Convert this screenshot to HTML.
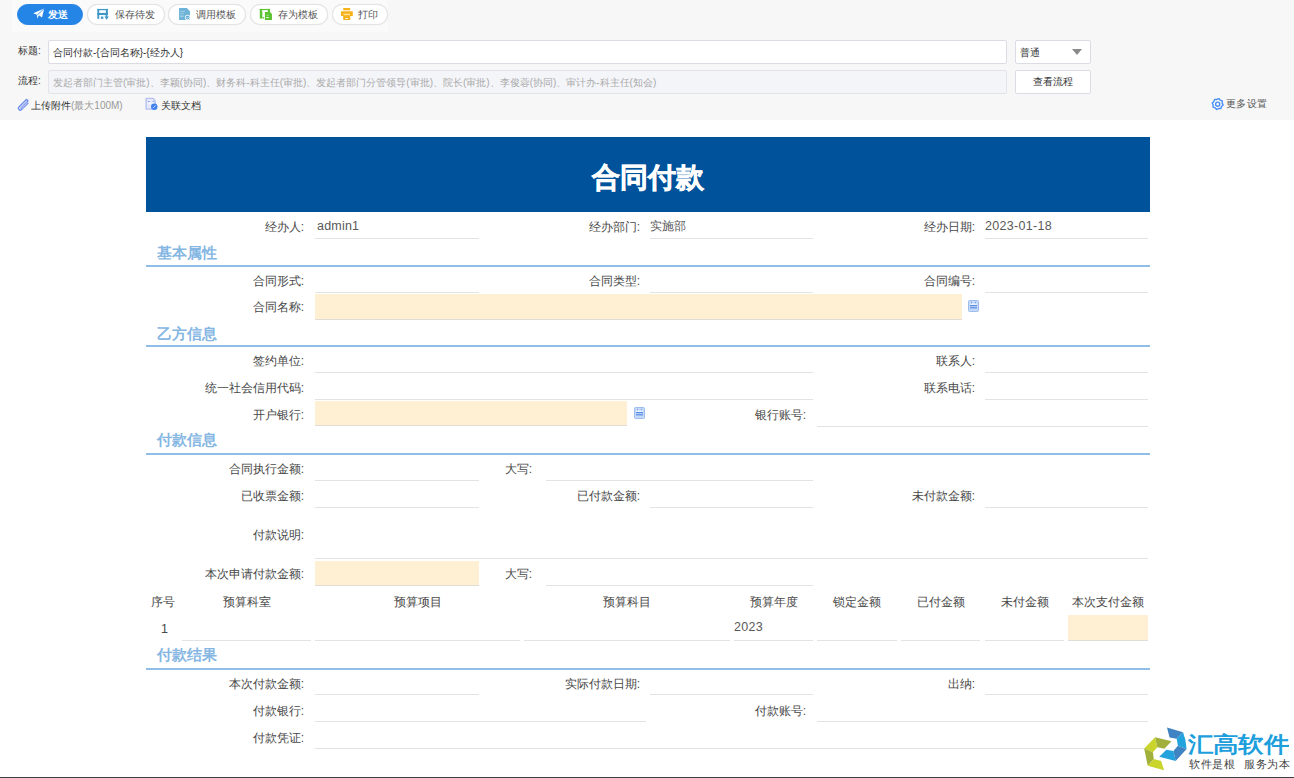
<!DOCTYPE html>
<html><head><meta charset="utf-8">
<style>
*{margin:0;padding:0;box-sizing:border-box}
html,body{width:1294px;height:778px;overflow:hidden;background:#fff;font-family:"Liberation Sans",sans-serif;color:#333}
.a{position:absolute}
#top{left:0;top:0;width:1294px;height:120px;background:#f7f7f7}
#tb{left:12px;top:0;width:376px;height:32px;background:#fafafa}
.btn{position:absolute;top:4px;height:21px;border-radius:10.5px;background:#fff;border:1px solid #e3e3e3;box-shadow:0 0 1px #e0e0e0;font-size:10px;line-height:18px;color:#555;white-space:nowrap}
.btn span{position:absolute;top:1px}
.ic{position:absolute}
.lbl{position:absolute;font-size:10px;color:#333;white-space:nowrap;line-height:12px}
.inp{position:absolute;background:#fff;border:1px solid #dcdce4;border-radius:2px}
.f{position:absolute;font-size:12px;color:#333;white-space:nowrap;line-height:14px}
.r{text-align:right}
.u{position:absolute;height:1px;background:#e3e3e3}
.bg{position:absolute;background:#ffefd3;border-bottom:1px solid #e0ddd6}
.sec{position:absolute;left:157px;font-size:15px;font-weight:bold;color:#86b7e3;line-height:18px}
.sl{position:absolute;left:146px;width:1004px;height:2px;background:#90bee7}
</style></head><body>
<div class="a" id="top"></div>
<div class="a" id="tb"></div>

<!-- toolbar buttons -->
<div class="btn" style="left:17px;width:66px;background:#2585e7;border-color:#2585e7;box-shadow:none;color:#fff">
  <svg class="ic" style="left:15px;top:3px" width="12" height="12" viewBox="0 0 12 12"><path d="M0.3 5.2 L11.2 0.5 L9 9.5 L6 7.2 L4.3 10.5 L3.9 6.8 Z" fill="#fff"/><path d="M11 0.8 L4.3 6.9" stroke="#2585e7" stroke-width="0.8"/></svg>
  <span style="left:30px;color:#fff;font-weight:bold">发送</span>
</div>
<div class="btn" style="left:87px;width:78px">
  <svg class="ic" style="left:4px;top:-2px" width="24" height="22" viewBox="0 0 849 778"><g fill="#3d97c9"><rect x="190" y="210" width="370" height="45"/><rect x="190" y="210" width="65" height="350"/><rect x="490" y="210" width="70" height="220"/><rect x="190" y="350" width="370" height="75"/><rect x="315" y="480" width="85" height="80"/><rect x="485" y="400" width="55" height="110"/><polygon points="440,480 595,480 517,595"/></g></svg>
  <span style="left:27px">保存待发</span>
</div>
<div class="btn" style="left:168px;width:78px">
  <svg class="ic" style="left:4px;top:-2px" width="24" height="22" viewBox="0 0 849 778"><path d="M215 175H490L600 290V600H215Z" fill="#6db3d7"/><rect x="260" y="290" width="160" height="30" fill="#fff" opacity=".45"/><rect x="260" y="365" width="120" height="25" fill="#fff" opacity=".45"/><rect x="260" y="450" width="110" height="28" fill="#fff" opacity=".8"/><circle cx="515" cy="510" r="95" fill="#fff"/><circle cx="515" cy="510" r="70" fill="#5eaad4"/><path d="M470 500L520 545L560 490" stroke="#fff" stroke-width="22" fill="none"/></svg>
  <span style="left:27px">调用模板</span>
</div>
<div class="btn" style="left:250px;width:78px">
  <svg class="ic" style="left:4px;top:-2px" width="24" height="22" viewBox="0 0 849 778"><g fill="#5cc231"><rect x="170" y="210" width="360" height="50"/><rect x="170" y="210" width="90" height="340"/><rect x="450" y="210" width="80" height="110"/><rect x="270" y="500" width="50" height="50"/><path d="M350 320H530L600 390V600H350Z"/></g><rect x="245" y="260" width="205" height="45" fill="#fff"/><rect x="262" y="305" width="88" height="195" fill="#fff" opacity="0"/><rect x="400" y="420" width="90" height="25" fill="#fff" opacity=".5"/><rect x="390" y="500" width="105" height="28" fill="#fff"/></svg>
  <span style="left:27px">存为模板</span>
</div>
<div class="btn" style="left:332px;width:56px">
  <svg class="ic" style="left:2px;top:-2px" width="24" height="22" viewBox="0 0 849 778"><g fill="#f7b11a"><rect x="290" y="175" width="250" height="80" rx="15"/><rect x="210" y="290" width="420" height="170" rx="20"/><rect x="290" y="400" width="250" height="200" rx="15"/></g><rect x="300" y="380" width="230" height="50" fill="#fde3a0"/><ellipse cx="415" cy="550" rx="55" ry="18" fill="#fff"/></svg>
  <span style="left:25px">打印</span>
</div>

<!-- title row -->
<div class="lbl" style="left:18px;top:45px">标题:</div>
<div class="inp" style="left:48px;top:40px;width:959px;height:24px"></div>
<div class="lbl" style="left:53px;top:47px;color:#333">合同付款-{合同名称}-{经办人}</div>
<div class="inp" style="left:1015px;top:40px;width:76px;height:24px"></div>
<div class="lbl" style="left:1020px;top:47px">普通</div>
<svg class="a" style="left:1072px;top:49px" width="10" height="6"><path d="M0 0H10L5 6Z" fill="#8a8a8a"/></svg>

<!-- flow row -->
<div class="lbl" style="left:18px;top:75px">流程:</div>
<div class="inp" style="left:48px;top:70px;width:959px;height:24px;background:#f4f5f9;border-color:#e2e4ea"></div>
<div class="lbl" style="left:53px;top:77px;color:#aaa">发起者部门主管(审批)、李颖(协同)、财务科-科主任(审批)、发起者部门分管领导(审批)、院长(审批)、李俊蓉(协同)、审计办-科主任(知会)</div>
<div class="inp" style="left:1015px;top:70px;width:76px;height:24px"></div>
<div class="lbl" style="left:1033px;top:76px">查看流程</div>

<!-- attachments -->
<svg class="a" style="left:12px;top:94px" width="24" height="20" viewBox="0 0 934 778"><path d="M560 215 L270 505 A70 70 0 0 0 370 605 L620 355 M560 215 A70 70 0 0 1 620 275 L350 545" fill="none" stroke="#6f8ff0" stroke-width="55" stroke-linecap="round"/><path d="M600 330L370 560" stroke="#aab9f4" stroke-width="60"/></svg>
<div class="lbl" style="left:31px;top:100px">上传附件<span style="color:#999">(最大100M)</span></div>
<svg class="a" style="left:140px;top:94px" width="24" height="20" viewBox="0 0 934 778"><path d="M240 170H500L590 260V590H240Z" fill="#e6e9fb" stroke="#b7c0f0" stroke-width="55" stroke-linejoin="round"/><rect x="300" y="275" width="80" height="30" rx="15" fill="#5a86ee"/><rect x="490" y="275" width="60" height="30" rx="15" fill="#5a86ee"/><rect x="280" y="340" width="270" height="25" fill="#fff"/><circle cx="555" cy="495" r="125" fill="#3f82ef"/><path d="M510 540L600 450" stroke="#c9d8fb" stroke-width="35" stroke-linecap="round"/></svg>
<div class="lbl" style="left:161px;top:100px">关联文档</div>
<svg class="a" style="left:1206px;top:94px" width="24" height="20" viewBox="0 0 934 778"><path d="M497 179 L555 240 L634 271 L632 355 L666 432 L605 490 L574 569 L490 567 L413 601 L355 540 L276 509 L278 425 L244 348 L305 290 L336 211 L420 213Z" fill="none" stroke="#4a8ef5" stroke-width="55" stroke-linejoin="round"/><circle cx="455" cy="395" r="80" fill="none" stroke="#4a8ef5" stroke-width="55"/></svg>
<div class="lbl" style="left:1226px;top:98px;color:#555;letter-spacing:0.3px">更多设置</div>

<!-- form header -->
<div class="a" style="left:146px;top:137px;width:1004px;height:75px;background:#00529b"></div>
<div class="a" style="left:146px;top:160px;width:1004px;text-align:center;font-size:28px;font-weight:bold;color:#fff;line-height:34px;-webkit-text-stroke:0.6px #fff;top:161px">合同付款</div>

<div class="f r" style="left:4px;top:220px;width:300px;font-size:12px;color:#484848">经办人:</div>
<div class="f" style="left:317px;top:219px;font-size:12px;color:#595959;font-size:12.5px;letter-spacing:0.2px">admin1</div>
<div class="u" style="left:315px;top:238px;width:164px"></div>
<div class="f r" style="left:340px;top:220px;width:300px;font-size:12px;color:#484848">经办部门:</div>
<div class="f" style="left:650px;top:219px;font-size:12px;color:#595959;">实施部</div>
<div class="u" style="left:650px;top:238px;width:163px"></div>
<div class="f r" style="left:675px;top:220px;width:300px;font-size:12px;color:#484848">经办日期:</div>
<div class="f" style="left:985px;top:219px;font-size:12px;color:#595959;font-size:12.5px;letter-spacing:0.3px">2023-01-18</div>
<div class="u" style="left:985px;top:238px;width:163px"></div>
<div class="sec" style="top:244px">基本属性</div>
<div class="sl" style="top:265px"></div>
<div class="f r" style="left:4px;top:274px;width:300px;font-size:12px;color:#484848">合同形式:</div>
<div class="u" style="left:315px;top:292px;width:164px"></div>
<div class="f r" style="left:340px;top:274px;width:300px;font-size:12px;color:#484848">合同类型:</div>
<div class="u" style="left:650px;top:292px;width:163px"></div>
<div class="f r" style="left:675px;top:274px;width:300px;font-size:12px;color:#484848">合同编号:</div>
<div class="u" style="left:985px;top:292px;width:163px"></div>
<div class="f r" style="left:4px;top:300px;width:300px;font-size:12px;color:#484848">合同名称:</div>
<div class="bg" style="left:315px;top:294px;width:647px;height:26px"></div>
<svg class="a" style="left:968px;top:300px" width="11" height="12" viewBox="0 0 11 12"><rect x="0.5" y="0.5" width="10" height="11" rx="1" fill="#c4d8f7" stroke="#9dbcf0"/><rect x="2" y="3.6" width="7" height="1" fill="#fff"/><rect x="2" y="5" width="7" height="1.2" fill="#5b8ee6"/><rect x="2" y="7.2" width="7" height="1.2" fill="#5b8ee6"/><rect x="3" y="1.8" width="1" height="1.6" fill="#7aa3ec"/><rect x="7" y="1.8" width="1" height="1.6" fill="#7aa3ec"/></svg>
<div class="sec" style="top:325px">乙方信息</div>
<div class="sl" style="top:345px"></div>
<div class="f r" style="left:4px;top:354px;width:300px;font-size:12px;color:#484848">签约单位:</div>
<div class="u" style="left:315px;top:372px;width:498px"></div>
<div class="f r" style="left:675px;top:354px;width:300px;font-size:12px;color:#484848">联系人:</div>
<div class="u" style="left:985px;top:372px;width:163px"></div>
<div class="f r" style="left:4px;top:381px;width:300px;font-size:12px;color:#484848">统一社会信用代码:</div>
<div class="u" style="left:315px;top:399px;width:498px"></div>
<div class="f r" style="left:675px;top:381px;width:300px;font-size:12px;color:#484848">联系电话:</div>
<div class="u" style="left:985px;top:399px;width:163px"></div>
<div class="f r" style="left:4px;top:408px;width:300px;font-size:12px;color:#484848">开户银行:</div>
<div class="bg" style="left:315px;top:401px;width:312px;height:25px"></div>
<svg class="a" style="left:634px;top:407px" width="11" height="12" viewBox="0 0 11 12"><rect x="0.5" y="0.5" width="10" height="11" rx="1" fill="#c4d8f7" stroke="#9dbcf0"/><rect x="2" y="3.6" width="7" height="1" fill="#fff"/><rect x="2" y="5" width="7" height="1.2" fill="#5b8ee6"/><rect x="2" y="7.2" width="7" height="1.2" fill="#5b8ee6"/><rect x="3" y="1.8" width="1" height="1.6" fill="#7aa3ec"/><rect x="7" y="1.8" width="1" height="1.6" fill="#7aa3ec"/></svg>
<div class="f r" style="left:506px;top:408px;width:300px;font-size:12px;color:#484848">银行账号:</div>
<div class="u" style="left:817px;top:426px;width:331px"></div>
<div class="sec" style="top:431px">付款信息</div>
<div class="sl" style="top:453px"></div>
<div class="f r" style="left:4px;top:462px;width:300px;font-size:12px;color:#484848">合同执行金额:</div>
<div class="u" style="left:315px;top:480px;width:164px"></div>
<div class="f r" style="left:232px;top:462px;width:300px;font-size:12px;color:#484848">大写:</div>
<div class="u" style="left:546px;top:480px;width:267px"></div>
<div class="f r" style="left:4px;top:489px;width:300px;font-size:12px;color:#484848">已收票金额:</div>
<div class="u" style="left:315px;top:507px;width:164px"></div>
<div class="f r" style="left:340px;top:489px;width:300px;font-size:12px;color:#484848">已付款金额:</div>
<div class="u" style="left:650px;top:507px;width:163px"></div>
<div class="f r" style="left:675px;top:489px;width:300px;font-size:12px;color:#484848">未付款金额:</div>
<div class="u" style="left:985px;top:507px;width:163px"></div>
<div class="f r" style="left:4px;top:528px;width:300px;font-size:12px;color:#484848">付款说明:</div>
<div class="u" style="left:315px;top:558px;width:833px"></div>
<div class="f r" style="left:4px;top:567px;width:300px;font-size:12px;color:#484848">本次申请付款金额:</div>
<div class="bg" style="left:315px;top:561px;width:164px;height:25px"></div>
<div class="f r" style="left:232px;top:567px;width:300px;font-size:12px;color:#484848">大写:</div>
<div class="u" style="left:546px;top:585px;width:267px"></div>
<div class="f" style="left:146px;top:595px;width:33px;text-align:center;color:#484848">序号</div>
<div class="f" style="left:182px;top:595px;width:129px;text-align:center;color:#484848">预算科室</div>
<div class="f" style="left:315px;top:595px;width:205px;text-align:center;color:#484848">预算项目</div>
<div class="f" style="left:524px;top:595px;width:206px;text-align:center;color:#484848">预算科目</div>
<div class="f" style="left:734px;top:595px;width:79px;text-align:center;color:#484848">预算年度</div>
<div class="f" style="left:817px;top:595px;width:80px;text-align:center;color:#484848">锁定金额</div>
<div class="f" style="left:901px;top:595px;width:79px;text-align:center;color:#484848">已付金额</div>
<div class="f" style="left:985px;top:595px;width:79px;text-align:center;color:#484848">未付金额</div>
<div class="f" style="left:1068px;top:595px;width:80px;text-align:center;color:#484848">本次支付金额</div>
<div class="f" style="left:161px;top:622px;font-size:12px;color:#484848;font-size:12.5px">1</div>
<div class="f" style="left:734px;top:620px;font-size:12px;color:#595959;font-size:12.5px;letter-spacing:0.3px">2023</div>
<div class="u" style="left:182px;top:640px;width:129px"></div>
<div class="u" style="left:315px;top:640px;width:205px"></div>
<div class="u" style="left:524px;top:640px;width:206px"></div>
<div class="u" style="left:734px;top:640px;width:79px"></div>
<div class="u" style="left:817px;top:640px;width:80px"></div>
<div class="u" style="left:901px;top:640px;width:79px"></div>
<div class="u" style="left:985px;top:640px;width:79px"></div>
<div class="bg" style="left:1068px;top:615px;width:80px;height:26px"></div>
<div class="sec" style="top:646px">付款结果</div>
<div class="sl" style="top:668px"></div>
<div class="f r" style="left:4px;top:677px;width:300px;font-size:12px;color:#484848">本次付款金额:</div>
<div class="u" style="left:315px;top:694px;width:164px"></div>
<div class="f r" style="left:340px;top:677px;width:300px;font-size:12px;color:#484848">实际付款日期:</div>
<div class="u" style="left:650px;top:694px;width:163px"></div>
<div class="f r" style="left:675px;top:677px;width:300px;font-size:12px;color:#484848">出纳:</div>
<div class="u" style="left:985px;top:694px;width:163px"></div>
<div class="f r" style="left:4px;top:704px;width:300px;font-size:12px;color:#484848">付款银行:</div>
<div class="u" style="left:315px;top:721px;width:331px"></div>
<div class="f r" style="left:506px;top:704px;width:300px;font-size:12px;color:#484848">付款账号:</div>
<div class="u" style="left:817px;top:721px;width:331px"></div>
<div class="f r" style="left:4px;top:731px;width:300px;font-size:12px;color:#484848">付款凭证:</div>
<div class="u" style="left:315px;top:748px;width:833px"></div>
<div class="a" style="left:0;top:777px;width:1294px;height:1px;background:#404040"></div>
<!-- logo -->
<svg class="a" style="left:1140px;top:724px" width="50" height="50" viewBox="0 0 778 778">
<polygon points="420,55 670,130 570,230 460,210" fill="#3f83c2"/>
<polygon points="670,130 705,240 725,390 590,340 570,230" fill="#22a3de"/>
<polygon points="590,340 725,390 555,575 520,420" fill="#3f83c2"/>
<polygon points="300,510 410,400 520,420 555,575" fill="#22a3de"/>
<polygon points="235,205 65,380 200,440 270,360" fill="#c9d52d"/>
<polygon points="235,205 490,270 380,385 270,360" fill="#a1af3b"/>
<polygon points="65,380 200,440 215,545 120,650" fill="#a1af3b"/>
<polygon points="120,650 215,545 330,575 375,720" fill="#c9d52d"/>
</svg>
<div class="a" style="left:1188px;top:731px;font-size:25px;line-height:30px;color:#1e9fdc;white-space:nowrap;transform:scaleY(0.86);transform-origin:0 0;font-weight:600;letter-spacing:0.2px">汇高软件</div>
<div class="a" style="left:1189px;top:758px;font-size:11px;line-height:13px;color:#444;white-space:nowrap;font-weight:500;letter-spacing:0.6px;word-spacing:5px">软件是根 服务为本</div>

</body></html>
